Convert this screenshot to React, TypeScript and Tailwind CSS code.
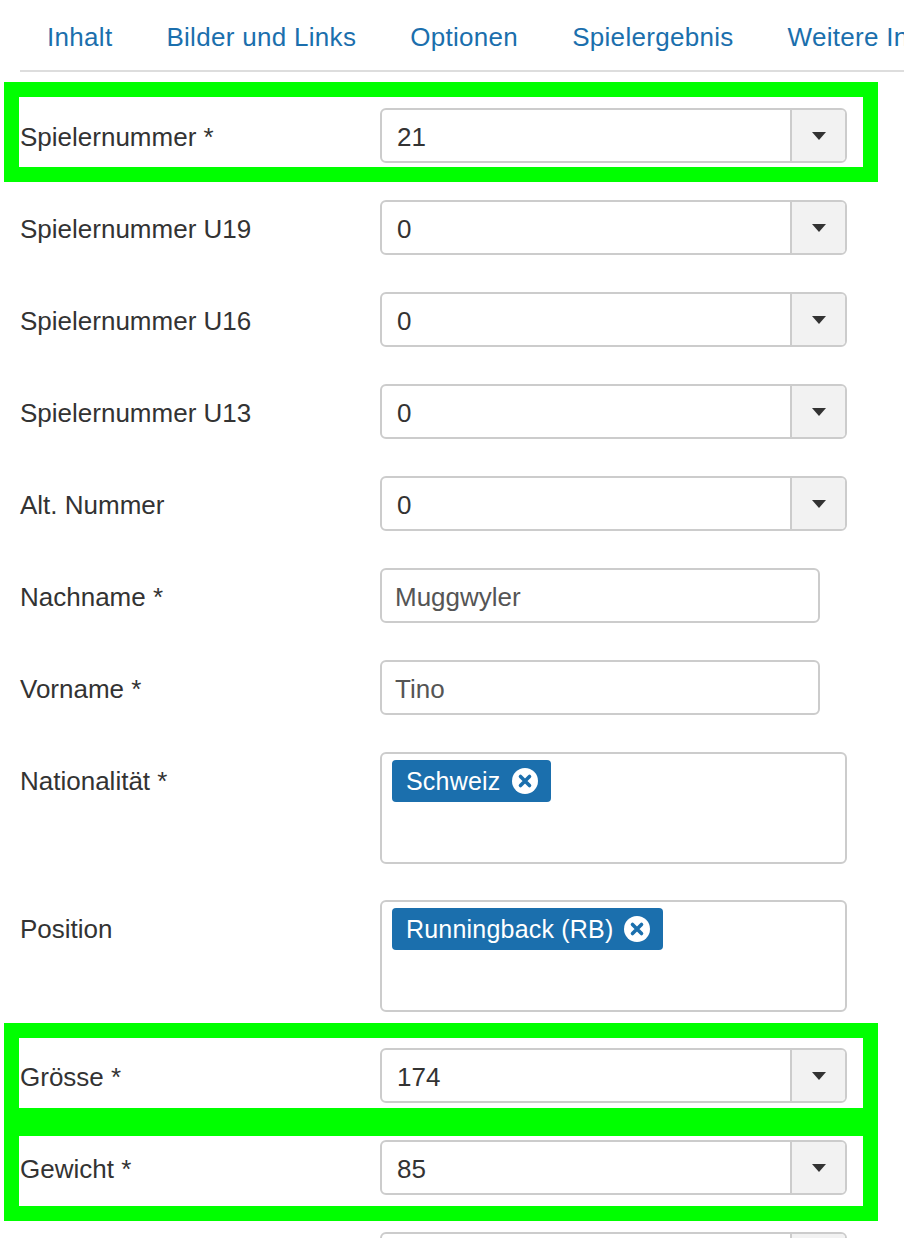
import { ReactNode } from "react";

const font = { fontFamily: '"Liberation Sans", Arial, sans-serif' };

const tabs = ["Inhalt", "Bilder und Links", "Optionen", "Spielergebnis", "Weitere Informationen"];

function Caret() {
  return (
    <svg width="14" height="8" viewBox="0 0 14 8" className="block">
      <path d="M0 0 L14 0 L7 8 Z" fill="#333" />
    </svg>
  );
}

function Select({ value }: { value: string }) {
  return (
    <div className="flex h-[55px] w-[467px] overflow-hidden rounded-[6px] border-2 border-[#cccccc] bg-white">
      <div className="flex flex-1 items-center pt-[3px] pl-[15px] text-[26px] text-[#333]">{value}</div>
      <div className="flex w-[55px] items-center justify-center border-l-2 border-[#cccccc] bg-[#f2f2f2]">
        <Caret />
      </div>
    </div>
  );
}

function TextInput({ value }: { value: string }) {
  return (
    <div className="flex h-[55px] w-[440px] items-center rounded-[6px] border-2 border-[#cccccc] bg-white pt-[3px] pl-[13px] text-[26px] text-[#555]">
      {value}
    </div>
  );
}

function Tag({ label }: { label: string }) {
  return (
    <div className="flex h-[42px] items-center gap-[11px] rounded-[4px] bg-[#1b6fad] pl-[14px] pr-[13px] text-[25px] tracking-[0.2px] text-white">
      <span className="pt-[2px]">{label}</span>
      <svg width="26" height="26" viewBox="0 0 26 26">
        <circle cx="13" cy="13" r="13" fill="#fff" />
        <path d="M8.5 8.5 L17.5 17.5 M17.5 8.5 L8.5 17.5" stroke="#1b6fad" strokeWidth="3.6" strokeLinecap="round" />
      </svg>
    </div>
  );
}

function MultiSelect({ tag }: { tag: string }) {
  return (
    <div className="flex h-[112px] w-[467px] items-start rounded-[6px] border-2 border-[#cccccc] bg-white pl-[10px] pt-[6px]">
      <Tag label={tag} />
    </div>
  );
}

function Row({ label, children, overlay }: { label: string; children: ReactNode; overlay?: ReactNode }) {
  return (
    <div className="relative mb-[37px] flex items-center">
      {overlay}
      <div className="w-[380px] pt-[3px] pl-[20px] text-[26px] text-[#333]">{label}</div>
      {children}
    </div>
  );
}

function MultiRow({ label, tag }: { label: string; tag: string }) {
  return (
    <div className="mb-[36px] flex items-start">
      <div className="w-[380px] pt-[10px] pl-[20px] text-[26px] text-[#333]">{label}</div>
      <MultiSelect tag={tag} />
    </div>
  );
}

export default function App() {
  return (
    <div className="h-[1238px] w-[904px] overflow-hidden bg-white" style={font}>
      <div className="ml-[20px] flex h-[72px] items-center border-b-2 border-[#dddddd] pt-[4px]">
        {tabs.map((t) => (
          <div key={t} className="shrink-0 px-[27px] text-[26px] tracking-[0.3px] whitespace-nowrap text-[#1b6fad]">
            {t}
          </div>
        ))}
      </div>

      <div className="pt-[36px]">
        <Row
          label="Spielernummer *"
          overlay={
            <div className="pointer-events-none absolute -top-[26px] -bottom-[19px] left-[4px] w-[874px] border-[15px] border-[#00ff00]" />
          }
        >
          <Select value="21" />
        </Row>
        <Row label="Spielernummer U19">
          <Select value="0" />
        </Row>
        <Row label="Spielernummer U16">
          <Select value="0" />
        </Row>
        <Row label="Spielernummer U13">
          <Select value="0" />
        </Row>
        <Row label="Alt. Nummer">
          <Select value="0" />
        </Row>
        <Row label="Nachname *">
          <TextInput value="Muggwyler" />
        </Row>
        <Row label="Vorname *">
          <TextInput value="Tino" />
        </Row>
        <MultiRow label="Nationalität *" tag="Schweiz" />
        <MultiRow label="Position" tag="Runningback (RB)" />
        <Row
          label="Grösse *"
          overlay={
            <div className="pointer-events-none absolute -top-[25px] left-[4px] h-[198px] w-[874px] border-[15px] border-[#00ff00]">
              <div className="mt-[70px] h-[28px] w-full bg-[#00ff00]" />
            </div>
          }
        >
          <Select value="174" />
        </Row>
        <Row label="Gewicht *">
          <Select value="85" />
        </Row>
        <Row label="">
          <Select value="" />
        </Row>
      </div>
    </div>
  );
}
